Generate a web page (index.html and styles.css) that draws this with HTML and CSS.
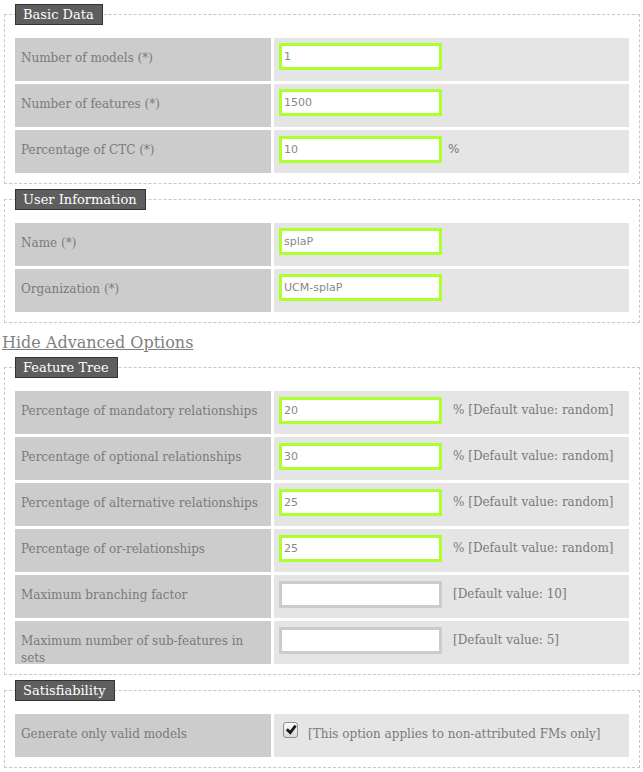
FILE: index.html
```html
<!DOCTYPE html>
<html lang="en">
<head>
<meta charset="utf-8">
<title>Feature model generator</title>
<link rel="stylesheet" href="styles.css">
</head>
<body>
<form class="form">
  <fieldset class="group">
    <legend class="group-title">Basic Data</legend>
    <div class="grid">
      <div class="label">Number of models (*)</div>
      <div class="field"><input class="text valid" type="text" value="1"></div>
      <div class="label">Number of features (*)</div>
      <div class="field"><input class="text valid" type="text" value="1500"></div>
      <div class="label">Percentage of CTC (*)</div>
      <div class="field"><input class="text valid" type="text" value="10"><span class="unit">%</span></div>
    </div>
  </fieldset>

  <fieldset class="group">
    <legend class="group-title">User Information</legend>
    <div class="grid">
      <div class="label">Name (*)</div>
      <div class="field"><input class="text valid" type="text" value="splaP"></div>
      <div class="label">Organization (*)</div>
      <div class="field"><input class="text valid" type="text" value="UCM-splaP"></div>
    </div>
  </fieldset>

  <div class="toggle"><a class="toggle-link" href="#">Hide Advanced Options</a></div>

  <fieldset class="group">
    <legend class="group-title">Feature Tree</legend>
    <div class="grid">
      <div class="label">Percentage of mandatory relationships</div>
      <div class="field"><input class="text valid" type="text" value="20"><span class="hint">% [Default value: random]</span></div>
      <div class="label">Percentage of optional relationships</div>
      <div class="field"><input class="text valid" type="text" value="30"><span class="hint">% [Default value: random]</span></div>
      <div class="label">Percentage of alternative relationships</div>
      <div class="field"><input class="text valid" type="text" value="25"><span class="hint">% [Default value: random]</span></div>
      <div class="label">Percentage of or-relationships</div>
      <div class="field"><input class="text valid" type="text" value="25"><span class="hint">% [Default value: random]</span></div>
      <div class="label">Maximum branching factor</div>
      <div class="field"><input class="text" type="text" value=""><span class="hint">[Default value: 10]</span></div>
      <div class="label">Maximum number of sub-features in sets</div>
      <div class="field"><input class="text" type="text" value=""><span class="hint">[Default value: 5]</span></div>
    </div>
  </fieldset>

  <fieldset class="group">
    <legend class="group-title">Satisfiability</legend>
    <div class="grid">
      <div class="label">Generate only valid models</div>
      <div class="field"><span class="check" role="checkbox" aria-checked="true"><svg class="check-mark" viewBox="0 0 13 14" width="13" height="14"><path d="M2.8 6.2 L6.3 9.6 L11.6 2.6" fill="none" stroke="#1c1c1c" stroke-width="2.8" stroke-linejoin="miter" stroke-linecap="butt"/></svg></span><span class="hint hint-check">[This option applies to non-attributed FMs only]</span></div>
    </div>
  </fieldset>
</form>
</body>
</html>
```

FILE: styles.css
```css
html, body {
  margin: 0;
}

body {
  padding: 4px 1px 0 2px;
  background: #ffffff;
  font-family: "DejaVu Serif", serif;
  color: #777777;
}

.form {
  margin: 0;
}

.group {
  margin: 0 2px 5px;
  padding: 13px 10px 10px 10px;
  border: 1px dashed #c8c8c8;
  min-width: 0;
}

.group-title {
  padding: 0 8px 0 7px;
  border: 1px solid #333333;
  background: #5e5e5e;
  color: #ffffff;
  font-size: 13px;
  line-height: 19px;
}

.grid {
  display: grid;
  grid-template-columns: 256px 1fr;
  grid-auto-rows: 43px;
  gap: 3px;
}

.label {
  background: #cccccc;
  padding: 12px 6px 0 6px;
  font-size: 12px;
  line-height: 17px;
  color: #7a7a7a;
  overflow: hidden;
}

.field {
  background: #e5e5e5;
  padding: 5px;
  font-size: 12px;
  line-height: 17px;
  white-space: nowrap;
  color: #7a7a7a;
}

.text {
  box-sizing: border-box;
  width: 163px;
  height: 27px;
  margin: 0;
  padding: 0 2px;
  border: 3px solid #cccccc;
  background: #ffffff;
  font-family: "DejaVu Sans", sans-serif;
  font-size: 11px;
  color: #888888;
  vertical-align: baseline;
  outline: none;
}

.text.valid {
  border-color: #adff2f;
}

.unit {
  margin-left: 6px;
  font-family: "DejaVu Sans", sans-serif;
  line-height: 28px;
}

.hint {
  margin-left: 11px;
  line-height: 28px;
}

.hint-check {
  margin-left: 7px;
  line-height: 17px;
}

.check {
  display: inline-block;
  box-sizing: border-box;
  width: 15px;
  height: 16px;
  margin: 3px 3px 2px 4px;
  border: 1px solid #8e8e8e;
  border-radius: 3px;
  background: linear-gradient(#fbfbfb, #dadada);
  vertical-align: -2px;
}

.check-mark {
  display: block;
}

.toggle {
  padding: 5px 0 5px;
  font-size: 16px;
  line-height: 19px;
}

.toggle-link {
  color: #808080;
  text-decoration: underline;
}
```
